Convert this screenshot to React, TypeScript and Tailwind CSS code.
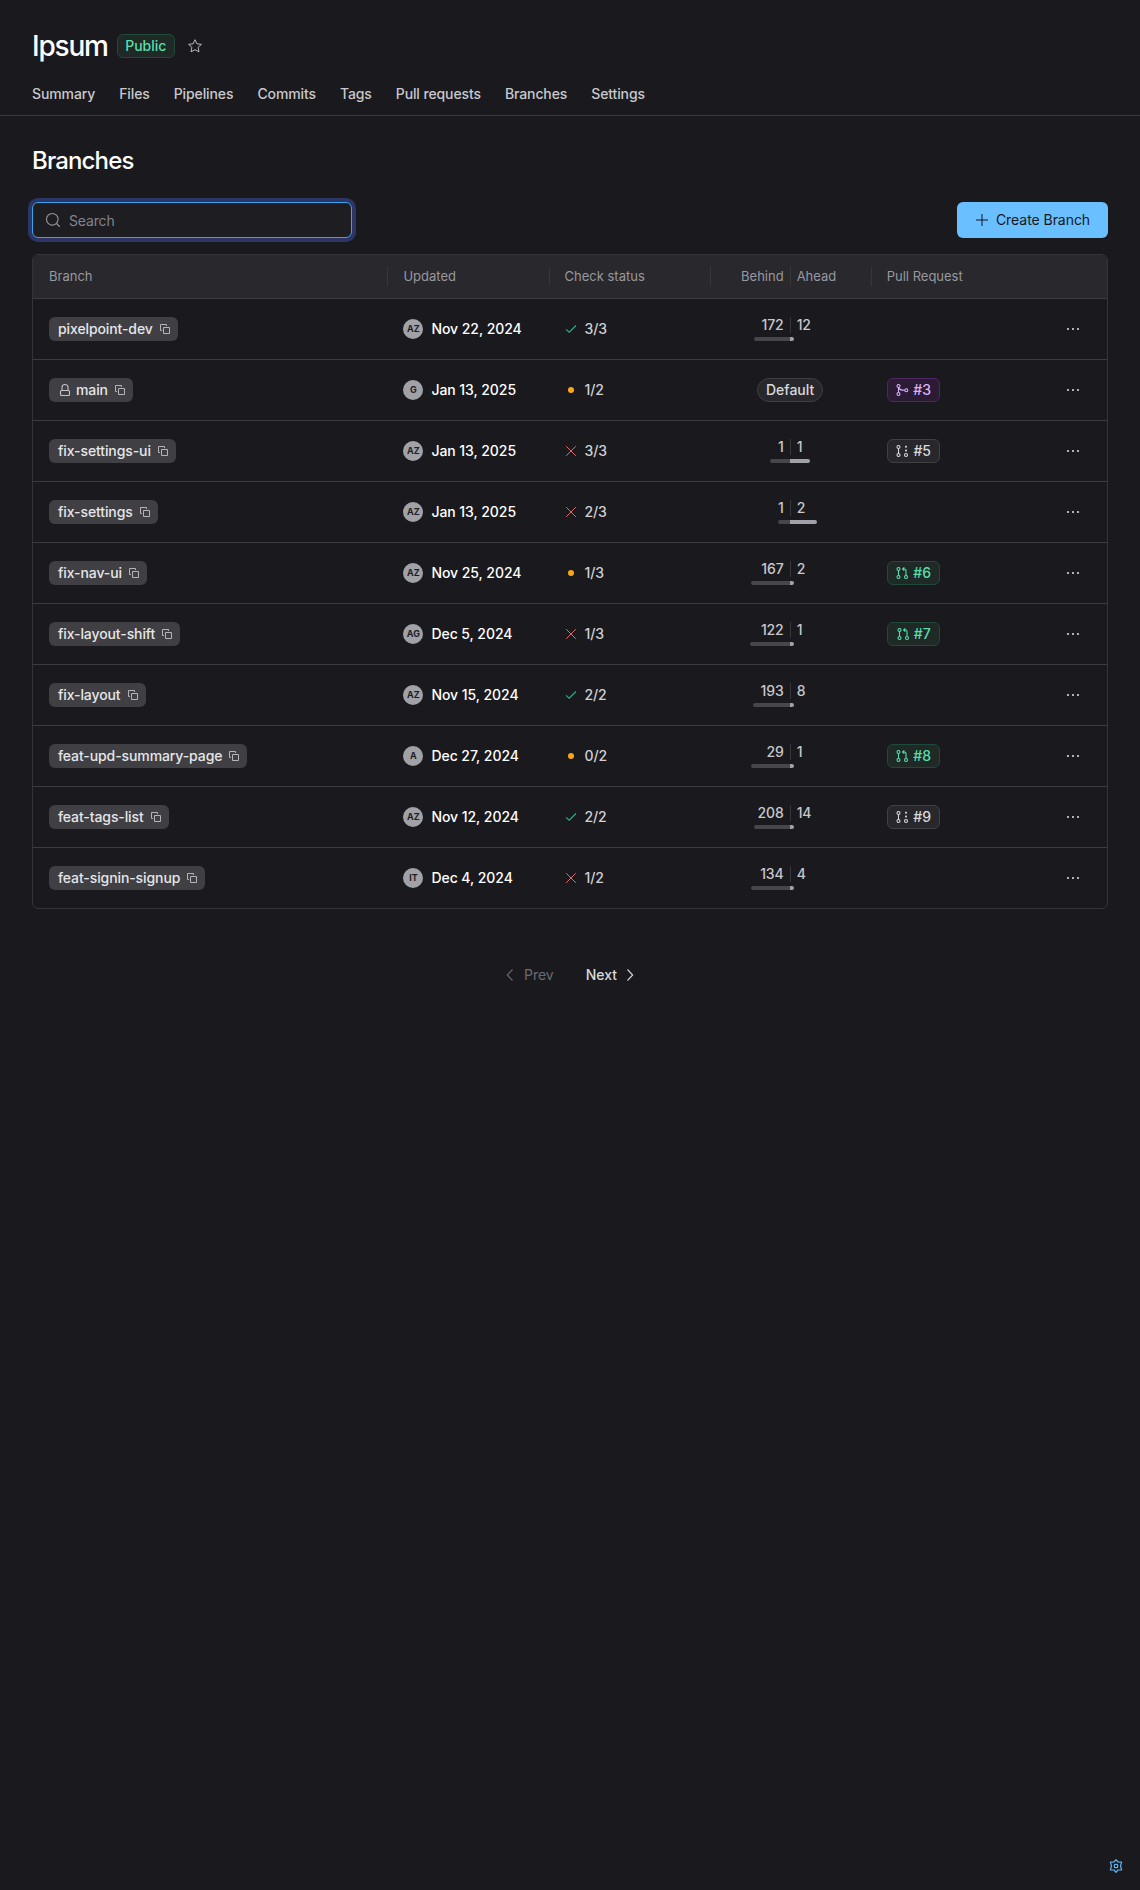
import React from "react";

type Check = "ok" | "run" | "fail";
type PrState = "merged" | "draft" | "open";
type Row = {
  name: string;
  locked?: boolean;
  by: string;
  date: string;
  check: Check;
  count: string;
  behind?: number;
  ahead?: number;
  bars?: [number, number];
  pr?: [PrState, string];
};

const rows: Row[] = [
  { name: "pixelpoint-dev", by: "AZ", date: "Nov 22, 2024", check: "ok", count: "3/3", behind: 172, ahead: 12, bars: [36.5, 4] },
  { name: "main", locked: true, by: "G", date: "Jan 13, 2025", check: "run", count: "1/2", pr: ["merged", "#3"] },
  { name: "fix-settings-ui", by: "AZ", date: "Jan 13, 2025", check: "fail", count: "3/3", behind: 1, ahead: 1, bars: [20, 20], pr: ["draft", "#5"] },
  { name: "fix-settings", by: "AZ", date: "Jan 13, 2025", check: "fail", count: "2/3", behind: 1, ahead: 2, bars: [12.5, 27] },
  { name: "fix-nav-ui", by: "AZ", date: "Nov 25, 2024", check: "run", count: "1/3", behind: 167, ahead: 2, bars: [39, 4], pr: ["open", "#6"] },
  { name: "fix-layout-shift", by: "AG", date: "Dec 5, 2024", check: "fail", count: "1/3", behind: 122, ahead: 1, bars: [40, 4], pr: ["open", "#7"] },
  { name: "fix-layout", by: "AZ", date: "Nov 15, 2024", check: "ok", count: "2/2", behind: 193, ahead: 8, bars: [37.5, 4] },
  { name: "feat-upd-summary-page", by: "A", date: "Dec 27, 2024", check: "run", count: "0/2", behind: 29, ahead: 1, bars: [39, 4], pr: ["open", "#8"] },
  { name: "feat-tags-list", by: "AZ", date: "Nov 12, 2024", check: "ok", count: "2/2", behind: 208, ahead: 14, bars: [36.5, 4], pr: ["draft", "#9"] },
  { name: "feat-signin-signup", by: "IT", date: "Dec 4, 2024", check: "fail", count: "1/2", behind: 134, ahead: 4, bars: [39, 4] },
];

const tabs = ["Summary", "Files", "Pipelines", "Commits", "Tags", "Pull requests", "Branches", "Settings"];

const grid = "grid grid-cols-[33%_15%_15%_15%_1fr]";

function CopyIcon() {
  return (
    <svg width="12" height="12" viewBox="0 0 12 12" fill="none" stroke="#b4b4ba" className="shrink-0">
      <path d="M3 7.5H1.5v-6h6V3" />
      <path d="M4.5 4.5h6v6h-6z" />
    </svg>
  );
}

function LockIcon() {
  return (
    <svg width="12" height="14" viewBox="0 0 12 14" fill="none" stroke="#c4c4c8" strokeWidth="1.1" className="shrink-0">
      <path d="M2.5 7.5h7q1 0 1 1v3q0 1-1 1h-7q-1 0-1-1v-3q0-1 1-1z" />
      <path d="M3 7.3V4.5a3 3 0 0 1 6 0v2.8" />
    </svg>
  );
}

function CheckIcon({ kind }: { kind: Check }) {
  return (
    <svg width="12" height="12" viewBox="0 0 12 12" fill="none" className="shrink-0">
      {kind === "ok" && <path d="M1 6.3 4.2 9.2 11 2.5" stroke="#22b588" strokeWidth="1.1" />}
      {kind === "run" && <circle cx="6" cy="6" r="3" fill="#faa51a" />}
      {kind === "fail" && <path d="m1.2 1.2 9.6 9.6M10.8 1.2l-9.6 9.6" stroke="#e56a6a" />}
    </svg>
  );
}

function PrIcon({ kind }: { kind: PrState }) {
  return (
    <svg width="14" height="14" viewBox="0 0 14 14" fill="none" stroke="currentColor" strokeWidth="1.1" className="shrink-0">
      <circle cx="3.5" cy="3" r="1.5" />
      <circle cx="3.5" cy="11" r="1.5" />
      <path d="M3.5 4.5v5" />
      {kind === "merged" && (
        <>
          <circle cx="11.3" cy="7.3" r="1.5" />
          <path d="M3.5 4.5c.5 1.8 2.4 2.8 6.300 2.800" />
        </>
      )}
      {kind === "draft" && (
        <>
          <circle cx="11" cy="11" r="1.5" />
          <g fill="currentColor" stroke="none">
            <rect x="10.1" y="1.8" width="1.8" height="1.8" />
            <rect x="10.1" y="5.6" width="1.8" height="1.8" />
          </g>
        </>
      )}
      {kind === "open" && (
        <>
          <circle cx="11" cy="11" r="1.5" />
          <path d="M11 9.5v-5Q11 3 9.500 3H7.800M9.300 1.300 7.600 3l1.700 1.700" />
        </>
      )}
    </svg>
  );
}

const prStyle: Record<PrState, string> = {
  merged: "border-[#4e2764] bg-[#2c1b35] text-[#dcb1fa]",
  draft: "border-[#3f3f46] bg-[#28282c] text-[#d9d9dd]",
  open: "border-[#1f4a3a] bg-[#1f2926] text-[#58dfae]",
};

function Divergence({ row }: { row: Row }) {
  if (!row.bars) {
    return (
      <span className="flex h-6 items-center rounded-full border border-[#3f3f46] bg-[#28282c] px-2 text-sm font-medium text-[#d9d9dd]">
        Default
      </span>
    );
  }
  return (
    <div className="grid w-full grid-cols-2 gap-y-1">
      <span className="h-4 pr-[6.5px] text-right text-sm leading-4 font-medium tracking-[-0.1px] text-[#c8c8cd]">{row.behind}</span>
      <span className="h-4 border-l border-[#35353a] pl-[5.5px] text-sm leading-4 font-medium tracking-[-0.1px] text-[#c8c8cd]">{row.ahead}</span>
      <span className="h-1 justify-self-end rounded-l-full bg-[#46464b]" style={{ width: row.bars[0] }} />
      <span className="h-1 rounded-r-full bg-[#a1a1a8]" style={{ width: row.bars[1] }} />
    </div>
  );
}

function Sep() {
  return <span className="absolute top-3 left-0 h-[19px] w-px bg-[#37373c]" />;
}

export default function App() {
  return (
    <div className="flex h-[1890px] w-full flex-col bg-[#1a1a1e] font-['Inter',sans-serif] text-sm text-white antialiased">
      <header className="flex h-[116px] flex-col border-b border-[#37373b] px-8">
        <div className="mt-7 flex h-9 items-center">
          <h1 className="text-[28px] leading-9 font-medium tracking-[-1.2px]">Ipsum</h1>
          <span className="ml-[9px] flex h-6 w-[58px] items-center justify-center rounded-md border border-[#1f4a3a] bg-[#1f2926] font-medium tracking-[-0.05px] text-[#58dfae]">Public</span>
          <svg width="14" height="14" viewBox="0 0 14 14" fill="none" stroke="#b9b9be" strokeLinejoin="round" className="ml-[13px]">
            <path d="m7 .7 1.9 4.1 4.5.55-3.3 3 .9 4.5L7 10.7l-4 2.15.9-4.5L.6 5.35l4.5-.55z" />
          </svg>
        </div>
        <nav className="mt-5 flex gap-6 font-medium tracking-[-0.11px] text-[#c8c8cd]">
          {tabs.map((t) => (
            <a key={t}>{t}</a>
          ))}
        </nav>
      </header>

      <main className="flex flex-col px-8">
        <h2 className="mt-[29px] text-2xl leading-8 font-medium tracking-[-0.85px]">Branches</h2>
        <div className="mt-[25px] flex items-center justify-between">
          <div className="flex h-9 w-80 items-center gap-2 rounded-md border border-[#35a3ee] bg-[#1e1d22] pl-3 text-[#83838b] shadow-[0_0_0_4px_#2b3666]">
            <svg width="16" height="16" viewBox="0 0 16 16" fill="none" stroke="#93939a" strokeWidth="1.1" strokeLinecap="round">
              <circle cx="7.3" cy="7.3" r="5.8" />
              <path d="m11.5 11.5 3 3" />
            </svg>
            <span className="mt-[2px] tracking-[-0.15px]">Search</span>
          </div>
          <button className="flex h-9 w-[151px] items-center justify-center gap-[7px] rounded-md bg-[#69bfff] text-[#17171c]">
            <svg width="14" height="14" viewBox="0 0 14 14" stroke="#17171c">
              <path d="M7 1v12M1 7h12" />
            </svg>
            <span className="tracking-[-0.05px]">Create Branch</span>
          </button>
        </div>

        <section className="mt-4 overflow-hidden rounded-md border border-[#333338]">
          <div className={`${grid} h-[43px] items-stretch bg-[#28282d] text-[13px] text-[#98989f]`}>
            <div className="flex items-center pl-4">Branch</div>
            <div className="relative flex items-center pl-4"><Sep />Updated</div>
            <div className="relative flex items-center pl-4"><Sep />Check status</div>
            <div className="relative grid grid-cols-2 items-center">
              <Sep />
              <span className="pr-[6.5px] text-right">Behind</span>
              <span className="relative flex h-full items-center pl-[6.5px]"><Sep />Ahead</span>
            </div>
            <div className="relative flex items-center pl-4"><Sep />Pull Request</div>
          </div>
          {rows.map((r) => (
            <div key={r.name} className={`${grid} h-[61px] items-center border-t border-[#3b3b40]`}>
              <div className="flex pl-4">
                <span className="flex h-6 items-center rounded-md bg-[#3f3f44] pr-[7px] pl-[9px] font-medium tracking-[-0.1px] text-[#e6e6e9]">
                  {r.locked && <span className="mr-[5px] ml-px"><LockIcon /></span>}
                  {r.name}
                  <span className="ml-[6px]"><CopyIcon /></span>
                </span>
              </div>
              <div className="flex items-center gap-2 pl-4">
                <span className="flex size-5 items-center justify-center rounded-full bg-[#a1a1a8] text-[9px] font-bold text-[#1e1e22]">{r.by}</span>
                <span className="font-medium tracking-[-0.05px] text-white">{r.date}</span>
              </div>
              <div className="flex items-center gap-2 pl-4">
                <CheckIcon kind={r.check} />
                <span className="font-medium tracking-[-0.1px] text-[#d0d0d5]">{r.count}</span>
              </div>
              <div className="flex justify-center">
                <Divergence row={r} />
              </div>
              <div className="flex items-center pr-[27px] pl-4">
                {r.pr && (
                  <span className={`flex h-6 w-[53px] items-center justify-center gap-1 rounded-md border font-medium ${prStyle[r.pr[0]]}`}>
                    <PrIcon kind={r.pr[0]} />
                    {r.pr[1]}
                  </span>
                )}
                <svg width="14" height="4" viewBox="0 0 14 4" fill="#d6d6da" className="ml-auto">
                  <circle cx="2" cy="2" r="1.1" />
                  <circle cx="7" cy="2" r="1.1" />
                  <circle cx="12" cy="2" r="1.1" />
                </svg>
              </div>
            </div>
          ))}
        </section>

        <div className="mt-14 flex items-center justify-center font-medium">
          <span className="flex items-center gap-[10px] font-normal text-[#6b6b70]">
            <svg width="8" height="12" viewBox="0 0 8 12" fill="none" stroke="currentColor" strokeWidth="1.1">
              <path d="M6.5.5 1.3 6l5.2 5.5" />
            </svg>
            Prev
          </span>
          <span className="ml-8 flex items-center gap-[9px] text-[#d9d9dd]">
            Next
            <svg width="8" height="12" viewBox="0 0 8 12" fill="none" stroke="currentColor" strokeWidth="1.1">
              <path d="M1.5.5 6.7 6l-5.2 5.5" />
            </svg>
          </span>
        </div>
      </main>

      <footer className="mt-auto flex justify-end pr-[17px] pb-[17px]">
        <svg width="14" height="14" viewBox="0 0 14 14" fill="none" stroke="#5db5f5" strokeWidth="1.2" strokeLinejoin="round">
          <path d="M7 .7 9 3l3.6.1L11.5 7l1.1 3.9L9 11l-2 2.3L5 11l-3.6-.1L2.5 7 1.4 3.1 5 3z" />
          <rect x="5.3" y="5.3" width="3.4" height="3.4" rx="1" />
        </svg>
      </footer>
    </div>
  );
}
